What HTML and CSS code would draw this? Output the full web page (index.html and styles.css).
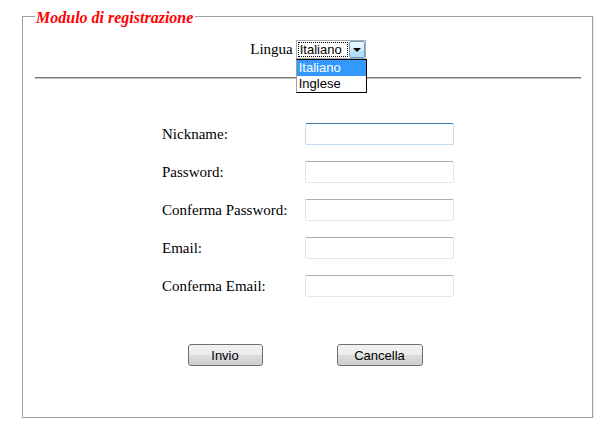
FILE: index.html
```html
<!DOCTYPE html>
<html lang="it">
<head>
<meta charset="utf-8">
<title>Modulo di registrazione</title>
<link rel="stylesheet" href="styles.css">
</head>
<body>
<fieldset class="form">
  <legend class="form-title">Modulo di registrazione</legend>
  <div class="lang-row">
    <span class="lang-label">Lingua</span>
    <div class="select">
      <span class="select-value">Italiano</span>
      <span class="select-btn"><span class="arrow"></span></span>
      <ul class="select-list">
        <li class="opt selected">Italiano</li>
        <li class="opt">Inglese</li>
      </ul>
    </div>
  </div>
  <hr class="sep">
  <div class="fields">
    <label class="lbl">Nickname:</label><span class="input focus"></span>
    <label class="lbl">Password:</label><span class="input"></span>
    <label class="lbl">Conferma Password:</label><span class="input"></span>
    <label class="lbl">Email:</label><span class="input"></span>
    <label class="lbl">Conferma Email:</label><span class="input"></span>
  </div>
  <div class="buttons">
    <button class="btn btn-send">Invio</button>
    <button class="btn btn-cancel">Cancella</button>
  </div>
</fieldset>
</body>
</html>
```
FILE: styles.css
```css
html, body {
  margin: 0;
  padding: 0;
  background: #fff;
}
body {
  font-family: "Liberation Serif", "Times New Roman", serif;
  font-size: 15px;
  color: #000;
}
.form {
  margin: 8px 21px 0 22px;
  padding: 0 11px 51px 12px;
  border: 1px solid #a0a0a0;
  box-shadow: 1px 1px 0 #ececec;
  min-width: 0;
}
.form-title {
  padding: 4px 2px 0 1px;
  line-height: 12px;
  font-size: 16px;
  font-weight: bold;
  font-style: italic;
  color: #ff0000;
}
.lang-row {
  margin-top: 16px;
  display: flex;
  justify-content: center;
  align-items: center;
  gap: 3px;
  height: 19px;
}
.lang-label {
  line-height: 19px;
}
.select {
  position: relative;
  width: 70px;
  height: 19px;
  box-sizing: border-box;
  border: 1px solid #a5acb5;
  display: flex;
  align-items: stretch;
  font-family: "Liberation Sans", Arial, sans-serif;
  font-size: 13px;
  background: #fff;
}
.select-value {
  flex: 1;
  margin: 1px;
  outline: 1px dotted #000;
  outline-offset: -1px;
  padding-left: 2px;
  line-height: 15px;
}
.select-btn {
  width: 16px;
  box-sizing: border-box;
  border: 1px solid #6c9cc4;
  border-radius: 2px;
  background: linear-gradient(#ecf7fd, #d5eefc 50%, #bfe5fb 51%, #aedcf7);
  display: flex;
  align-items: center;
  justify-content: center;
}
.arrow {
  width: 0;
  height: 0;
  border-left: 4px solid transparent;
  border-right: 4px solid transparent;
  border-top: 4px solid #000;
  margin-top: 1px;
}
.select-list {
  position: absolute;
  top: 18px;
  left: -1px;
  width: 71px;
  box-sizing: border-box;
  margin: 0;
  padding: 0;
  list-style: none;
  border: 1px solid #000;
  border-left-color: #a0a0a0;
  background: #fff;
  z-index: 2;
}
.opt {
  height: 16px;
  line-height: 16px;
  padding-left: 2px;
  color: #000;
}
.opt.selected {
  background: #3399ff;
  color: #fff;
}
.sep {
  margin: 18px 0 0 0;
  height: 0;
  border: 0;
  border-top: 1px solid #767676;
  border-bottom: 1px solid #c4c4c4;
}
.fields {
  margin-top: 44px;
  display: grid;
  grid-template-columns: 143px 149px;
  grid-auto-rows: 22px;
  row-gap: 16px;
  justify-content: center;
  align-items: center;
}
.lbl {
  line-height: 17px;
}
.input {
  display: block;
  height: 22px;
  box-sizing: border-box;
  border: 1px solid #e2e3ea;
  border-top-color: #abadb3;
  border-bottom-color: #e3e9ef;
  border-radius: 2px;
  background: #fff;
}
.input.focus {
  border-color: #c5daed;
  border-top-color: #3d7bad;
}
.buttons {
  margin-top: 47px;
  display: flex;
  justify-content: center;
  gap: 74px;
  padding-right: 6px;
}
.btn {
  height: 22px;
  margin: 0;
  padding: 0;
  border: 1px solid #707070;
  border-radius: 3px;
  background: linear-gradient(#f2f2f2, #ebebeb 50%, #dddddd 51%, #cfcfcf);
  font-family: "Liberation Sans", Arial, sans-serif;
  font-size: 13px;
  color: #000;
}
.btn-send { width: 75px; }
.btn-cancel { width: 86px; }
```
